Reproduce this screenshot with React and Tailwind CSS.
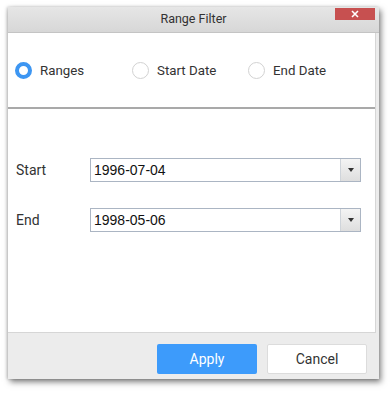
export default function App() {
    const radios = [
        { label: 'Ranges', checked: true, w: 'w-[117px]' },
        { label: 'Start Date', checked: false, w: 'w-[116px]' },
        { label: 'End Date', checked: false, w: 'w-auto' },
    ];

    const dateRow = (label, value) => (
        <div className="flex items-center h-[24px]">
            <span className="w-[74px] text-[14px] text-[#333]">{label}</span>
            <div className="flex w-[271px] h-[24px] bg-white border border-[#abb5c3]">
                <span className="flex-1 pl-[3px] text-[14px] leading-[22px] text-[#111] font-['Liberation_Sans','Noto_Sans',sans-serif]">{value}</span>
                <div className="w-[20px] h-full border-l border-[#cfd4da] bg-gradient-to-b from-[#f4f4f4] to-[#dedede] flex items-center justify-center">
                    <span className="w-0 h-0 border-l-[3.5px] border-r-[3.5px] border-t-[4px] border-l-transparent border-r-transparent border-t-[#333]" />
                </div>
            </div>
        </div>
    );

    return (
        <div className="w-[392px] h-[393px] bg-white pt-[7px] pl-[8px] font-['Roboto','Liberation_Sans',sans-serif]">
            <div className="w-[371px] h-[372px] bg-[#ececec] flex flex-col shadow-[2px_3px_6px_rgba(0,0,0,0.5),-1px_0_3px_rgba(0,0,0,0.2)]">
                {/* title bar */}
                <div className="relative h-[26px] shrink-0 bg-gradient-to-b from-[#e6e6e6] to-[#d7d7d7] border-b border-[#c4c4c4] flex items-center justify-center">
                    <span className="text-[12.5px] text-[#333]">Range Filter</span>
                    <div className="absolute right-[4px] top-[1px] w-[40px] h-[12px] bg-[#c75050] flex items-center justify-center">
                        <svg width="8" height="8" viewBox="0 0 8 8">
                            <path d="M1 1L7 7M7 1L1 7" stroke="white" strokeWidth="1.6" />
                        </svg>
                    </div>
                </div>

                {/* content */}
                <div className="mr-[3px] h-[300px] shrink-0 bg-white border-r border-b border-[#d6d6d6] flex flex-col">
                    <div className="h-[76px] shrink-0 border-b-2 border-[#a9a9a9] flex items-center pl-[7px] pt-[1px]">
                        {radios.map(r => (
                            <div key={r.label} className={`flex items-center gap-[8px] ${r.w}`}>
                                <span className={`w-[17px] h-[17px] rounded-full bg-white ${r.checked ? 'border-[4px] border-[#3d96f2]' : 'border border-[#d2d2d2]'}`} />
                                <span className="text-[13.3px] text-[#333]">{r.label}</span>
                            </div>
                        ))}
                    </div>
                    <div className="flex flex-col gap-[26px] pl-[8px] pt-[49px]">
                        {dateRow('Start', '1996-07-04')}
                        {dateRow('End', '1998-05-06')}
                    </div>
                </div>

                {/* footer */}
                <div className="flex-1 flex justify-end items-start gap-[10px] pt-[11px] pr-[12px]">
                    <button className="w-[100px] h-[30px] rounded-[2px] bg-[#3d9bfb] text-white text-[14px]">Apply</button>
                    <button className="w-[100px] h-[30px] rounded-[2px] bg-white border border-[#dcdcdc] text-[#333] text-[14px]">Cancel</button>
                </div>
            </div>
        </div>
    );
}
